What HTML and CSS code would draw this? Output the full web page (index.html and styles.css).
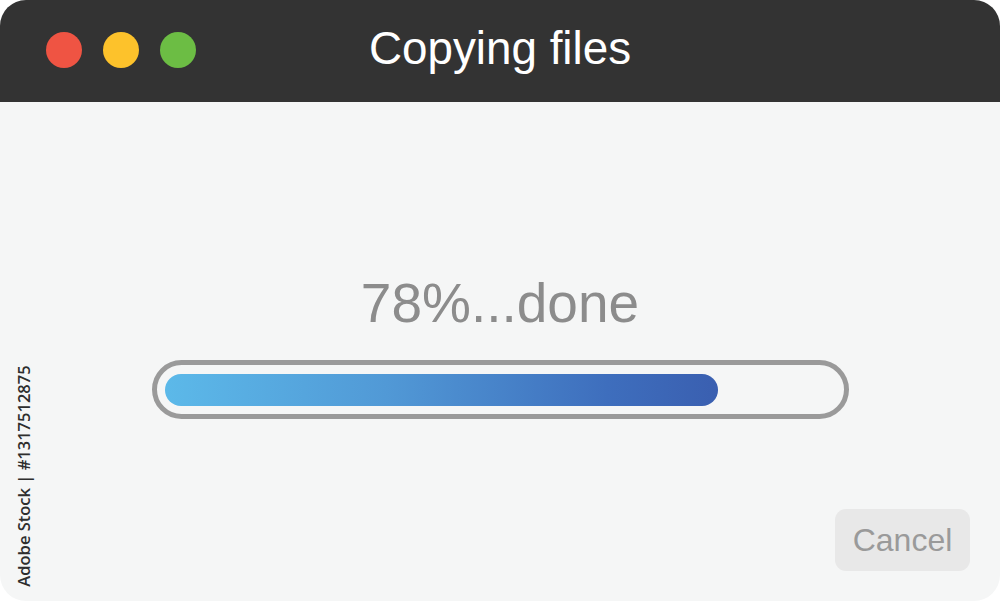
FILE: index.html
```html
<!DOCTYPE html>
<html>
<head>
<meta charset="utf-8">
<link rel="stylesheet" href="styles.css">
</head>
<body>
<div class="window">
  <header class="titlebar">
    <div class="lights">
      <span class="light red"></span>
      <span class="light yellow"></span>
      <span class="light green"></span>
    </div>
    <h1 class="title">Copying files</h1>
    <div class="spacer"></div>
  </header>
  <main class="content">
    <div class="status">78%...done</div>
    <div class="progress">
      <div class="fill" style="width: 553px"></div>
    </div>
    <div class="actions">
      <button class="cancel">Cancel</button>
    </div>
  </main>
  <div class="credit">Adobe Stock | #1317512875</div>
</div>
</body>
</html>
```
FILE: styles.css
```css
html, body {
  margin: 0;
  padding: 0;
  background: #ffffff;
}
body {
  width: 1000px;
  height: 601px;
  overflow: hidden;
  font-family: "Liberation Sans", Arial, sans-serif;
}
.window {
  position: relative;
  width: 1000px;
  height: 601px;
  border-radius: 26px;
  overflow: hidden;
  background: #f5f6f6;
  display: flex;
  flex-direction: column;
}
.titlebar {
  height: 102px;
  flex: none;
  background: #333333;
  display: grid;
  grid-template-columns: 1fr auto 1fr;
  align-items: center;
}
.lights {
  display: flex;
  gap: 21px;
  padding-left: 46px;
  padding-bottom: 2px;
}
.light {
  width: 36px;
  height: 36px;
  border-radius: 50%;
  display: block;
}
.red { background: #ef5443; }
.yellow { background: #fdc22b; }
.green { background: #6cbd44; }
.title {
  margin: 0;
  color: #ffffff;
  font-weight: normal;
  font-size: 45.8px;
  line-height: 1;
  padding-bottom: 4px;
}
.content {
  flex: 1;
  display: flex;
  flex-direction: column;
  align-items: center;
  padding-top: 174px;
}
.status {
  font-size: 55px;
  line-height: 55px;
  color: #8c8c8c;
}
.progress {
  margin-top: 29px;
  width: 697px;
  height: 59px;
  border: 5px solid #9a9a9a;
  border-radius: 30px;
  padding: 0 8px;
  box-sizing: border-box;
  display: flex;
  align-items: center;
}
.fill {
  height: 32px;
  border-radius: 16px;
  background: linear-gradient(90deg, #5cb9e9 0%, #5199d6 40%, #3e6ebd 80%, #3a5fb0 100%);
}
.actions {
  align-self: stretch;
  display: flex;
  justify-content: flex-end;
  padding-right: 30px;
  margin-top: 90px;
}
.cancel {
  width: 135px;
  height: 62px;
  border: none;
  border-radius: 11px;
  background: #e8e8e8;
  color: #9a9a9a;
  font-family: "Liberation Sans", Arial, sans-serif;
  font-size: 32px;
  padding: 0;
}
.credit {
  position: absolute;
  left: 23px;
  top: 476px;
  transform: translate(-50%, -50%) rotate(-90deg);
  white-space: nowrap;
  font-family: "Open Sans", "Liberation Sans", sans-serif;
  font-size: 16.5px;
  font-weight: 600;
  color: #2e2e2e;
}
```
